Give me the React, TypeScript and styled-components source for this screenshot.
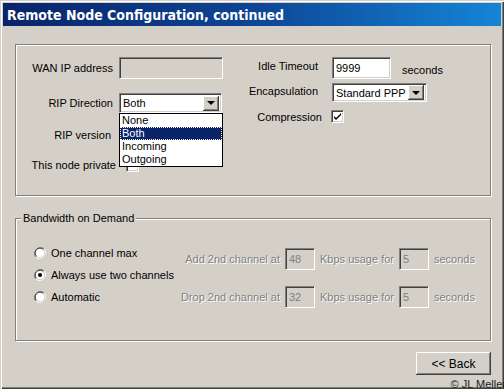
import React from 'react';
import styled, { createGlobalStyle } from 'styled-components';

const FACE = '#d4d0c8';

const GlobalStyle = createGlobalStyle`
  html, body {
    margin: 0;
    padding: 0;
    background: ${FACE};
  }
  body {
    font-family: "Liberation Sans", Arial, sans-serif;
    font-size: 11px;
    color: #000;
  }
`;

const Window = styled.div`
  position: relative;
  width: 504px;
  height: 389px;
  box-sizing: border-box;
  padding: 3px;
  background: ${FACE};
  box-shadow: inset 1px 1px ${FACE}, inset 2px 2px #fff,
    inset -1px -1px #404040, inset -2px -2px #808080;
  display: flex;
  flex-direction: column;
  overflow: hidden;
`;

const TitleBar = styled.div`
  height: 23px;
  display: flex;
  align-items: center;
  padding-left: 4px;
  background: linear-gradient(to right, #0a246a 0%, #0e4595 50%, #1585d6 100%);
  color: #fff;
  font-family: "DejaVu Sans", Verdana, sans-serif;
  font-stretch: condensed;
  font-weight: bold;
  font-size: 14px;
`;

const Body = styled.div`
  flex: 1;
  display: flex;
  flex-direction: column;
  padding: 18px 10px 0 12px;
`;

const etched = `
  border: 1px solid #808080;
  box-shadow: inset 1px 1px #fff, 1px 1px #fff;
`;

const TopPanel = styled.div`
  ${etched}
  height: 152px;
  box-sizing: border-box;
  padding-top: 12px;
  display: flex;
`;

const Column = styled.div<{ $w: number }>`
  width: ${(p) => p.$w}px;
  display: flex;
  flex-direction: column;
`;

const Row = styled.div<{ $h: number; $top?: number }>`
  position: relative;
  display: flex;
  align-items: center;
  height: ${(p) => p.$h}px;
  margin-top: ${(p) => p.$top ?? 0}px;
`;

const Label = styled.span<{ $w: number; $gap: number; $dy?: number }>`
  width: ${(p) => p.$w}px;
  margin-right: ${(p) => p.$gap}px;
  text-align: right;
  white-space: nowrap;
  position: relative;
  top: ${(p) => p.$dy ?? 0}px;
`;

const Text = styled.span<{ $gap?: number; $dy?: number; $off?: boolean }>`
  margin-left: ${(p) => p.$gap ?? 0}px;
  white-space: nowrap;
  position: relative;
  top: ${(p) => p.$dy ?? 0}px;
  color: ${(p) => (p.$off ? '#808080' : '#000')};
  text-shadow: ${(p) => (p.$off ? '1px 1px #fff' : 'none')};
`;

const sunken = `
  box-sizing: border-box;
  border: 1px solid;
  border-color: #808080 #fff #fff #808080;
  box-shadow: inset 1px 1px #404040, inset -1px -1px ${FACE};
`;

const Field = styled.div<{ $w: number; $h: number; $off?: boolean }>`
  ${sunken}
  flex: none;
  width: ${(p) => p.$w}px;
  height: ${(p) => p.$h}px;
  background: ${(p) => (p.$off ? FACE : '#fff')};
  color: ${(p) => (p.$off ? '#808080' : '#000')};
  display: flex;
  align-items: center;
  padding: 0 3px;
  white-space: nowrap;
  overflow: hidden;
`;

const DropField = styled(Field)`
  padding: 0 2px 0 3px;
  justify-content: space-between;
`;

const DropButton = styled.span`
  flex: none;
  width: 16px;
  height: 15px;
  box-sizing: border-box;
  background: ${FACE};
  box-shadow: inset -1px -1px #404040, inset 1px 1px #fff, inset -2px -2px #808080;
  display: flex;
  align-items: center;
  justify-content: center;
  &::after {
    content: '';
    border-left: 4px solid transparent;
    border-right: 4px solid transparent;
    border-top: 4px solid #000;
    margin-left: -1px;
  }
`;

const ListBox = styled.ul`
  position: absolute;
  z-index: 2;
  top: 20px;
  left: 103px;
  width: 104px;
  margin: 0;
  padding: 0;
  list-style: none;
  box-sizing: border-box;
  border: 1px solid #000;
  background: #fff;
`;

const Option = styled.li<{ $on?: boolean }>`
  height: 13px;
  line-height: 13px;
  padding-left: 2px;
  background: ${(p) => (p.$on ? '#0a246a' : '#fff')};
  color: ${(p) => (p.$on ? '#fff' : '#000')};
  outline: ${(p) => (p.$on ? '1px dotted #fff' : 'none')};
  outline-offset: -1px;
`;

const Box = styled.span`
  ${sunken}
  flex: none;
  width: 13px;
  height: 13px;
  background: #fff;
  display: flex;
  align-items: center;
  justify-content: center;
`;

const Group = styled.fieldset`
  ${etched}
  margin: 15px 0 0;
  padding: 0 0 0 18px;
  height: 130px;
  box-sizing: border-box;
  min-width: 0;
  display: flex;
`;

const Legend = styled.legend`
  margin-left: -13px;
  padding: 0 2px;
  line-height: 15px;
  background: ${FACE};
`;

const RadioCol = styled.div`
  width: 142px;
  margin-top: 16px;
  display: flex;
  flex-direction: column;
`;

const RadioRow = styled.label`
  height: 22px;
  display: flex;
  align-items: center;
  gap: 5px;
  white-space: nowrap;
`;

const UsageGrid = styled.div`
  margin-top: 22px;
  display: grid;
  grid-template-columns: 104px 30px 74px 30px auto;
  grid-auto-rows: 22px;
  column-gap: 5px;
  row-gap: 16px;
  align-items: center;
`;

const GridLabel = styled(Text)`
  text-align: right;
`;

const Footer = styled.div`
  display: flex;
  justify-content: flex-end;
  margin-top: 11px;
`;

const Button = styled.button`
  width: 75px;
  height: 23px;
  border: none;
  padding: 0;
  background: ${FACE};
  font: inherit;
  font-size: 12px;
  color: #000;
  box-shadow: inset -1px -1px #404040, inset 1px 1px #fff, inset -2px -2px #808080;
`;

const Copyright = styled.span`
  position: absolute;
  right: -2px;
  bottom: -1px;
  font-size: 11px;
  color: #1a1a1a;
  white-space: nowrap;
`;

const Check = () => (
  <svg width="9" height="9" viewBox="0 0 9 9">
    <path d="M1 4 L3 6 L8 1 L8 3 L3 8 L1 6 Z" fill="#000" />
  </svg>
);

const Radio = ({ on }: { on: boolean }) => (
  <svg width="12" height="12" viewBox="0 0 12 12" style={{ flex: 'none' }}>
    <path d="M10.2 1.8 A6 6 0 0 0 1.8 10.2" fill="none" stroke="#808080" strokeWidth="1" />
    <path d="M1.8 10.2 A6 6 0 0 0 10.2 1.8" fill="none" stroke="#fff" strokeWidth="1" />
    <circle cx="6" cy="6" r="4.6" fill="#fff" />
    <path d="M9.4 2.6 A4.8 4.8 0 0 0 2.6 9.4" fill="none" stroke="#404040" strokeWidth="1" />
    <path d="M2.6 9.4 A4.8 4.8 0 0 0 9.4 2.6" fill="none" stroke={FACE} strokeWidth="1" />
    {on && <circle cx="6" cy="6" r="2" fill="#000" />}
  </svg>
);

const Select = ({ value, w, h }: { value: string; w: number; h: number }) => (
  <DropField $w={w} $h={h}>
    <span>{value}</span>
    <DropButton />
  </DropField>
);

const ripOptions = ['None', 'Both', 'Incoming', 'Outgoing'];

const usage = [
  { label: 'Add 2nd channel at', kbps: '48', secs: '5' },
  { label: 'Drop 2nd channel at', kbps: '32', secs: '5' },
];

const radios = [
  { label: 'One channel max', on: false },
  { label: 'Always use two channels', on: true },
  { label: 'Automatic', on: false },
];

export default function App() {
  return (
    <>
      <GlobalStyle />
      <Window>
        <TitleBar>Remote Node Configuration, continued</TitleBar>
        <Body>
          <TopPanel>
            <Column $w={220}>
              <Row $h={22}>
                <Label $w={97} $gap={6}>WAN IP address</Label>
                <Field $w={104} $h={22} $off />
              </Row>
              <Row $h={20} $top={14}>
                <Label $w={97} $gap={6}>RIP Direction</Label>
                <Select value="Both" w={103} h={20} />
                <ListBox>
                  {ripOptions.map((o) => (
                    <Option key={o} $on={o === 'Both'}>
                      {o}
                    </Option>
                  ))}
                </ListBox>
              </Row>
              <Row $h={20} $top={12}>
                <Label $w={95} $gap={8}>RIP version</Label>
                <Select value="" w={103} h={20} />
              </Row>
              <Row $h={20} $top={10}>
                <Label $w={100} $gap={10}>This node private</Label>
                <Box />
              </Row>
            </Column>
            <Column $w={240}>
              <Row $h={22}>
                <Label $w={82} $gap={14} $dy={-2}>Idle Timeout</Label>
                <Field $w={59} $h={22}>9999</Field>
                <Text $gap={11} $dy={2}>seconds</Text>
              </Row>
              <Row $h={19} $top={4}>
                <Label $w={82} $gap={14} $dy={-2}>Encapsulation</Label>
                <Select value="Standard PPP" w={95} h={19} />
              </Row>
              <Row $h={13} $top={8}>
                <Label $w={86} $gap={9}>Compression</Label>
                <Box>
                  <Check />
                </Box>
              </Row>
            </Column>
          </TopPanel>

          <Group>
            <Legend>Bandwidth on Demand</Legend>
            <RadioCol>
              {radios.map((r) => (
                <RadioRow key={r.label}>
                  <Radio on={r.on} />
                  {r.label}
                </RadioRow>
              ))}
            </RadioCol>
            <UsageGrid>
              {usage.map((u) => (
                <React.Fragment key={u.label}>
                  <GridLabel $off>{u.label}</GridLabel>
                  <Field $w={30} $h={22} $off>{u.kbps}</Field>
                  <Text $off>Kbps usage for</Text>
                  <Field $w={30} $h={22} $off>{u.secs}</Field>
                  <Text $off>seconds</Text>
                </React.Fragment>
              ))}
            </UsageGrid>
          </Group>

          <Footer>
            <Button>&lt;&lt; Back</Button>
          </Footer>
        </Body>
        <Copyright>© JL Meller</Copyright>
      </Window>
    </>
  );
}
